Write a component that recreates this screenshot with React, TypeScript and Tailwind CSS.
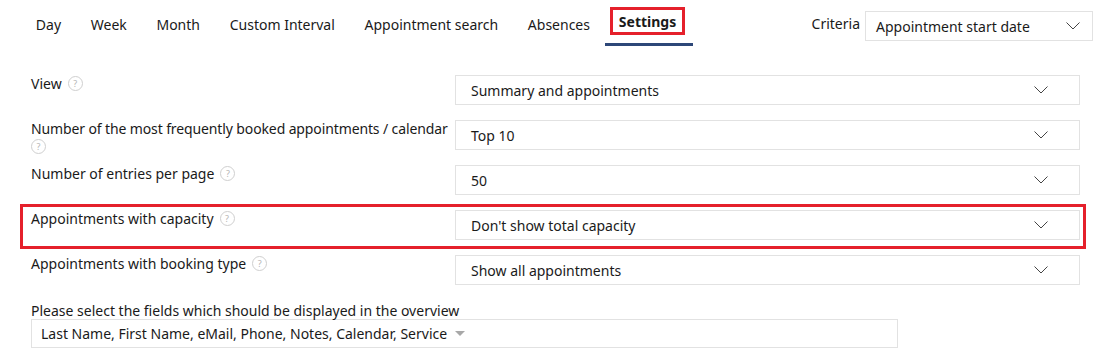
import React from "react";

const font = { fontFamily: '"Noto Sans", "Open Sans", Arial, sans-serif' };

function Help() {
  return (
    <span className="ml-[6px] inline-flex h-[15px] w-[15px] items-center justify-center rounded-full border border-[#cfcfcf] align-[2px] text-[9px] leading-none text-[#b5b5b5]">
      ?
    </span>
  );
}

function Chevron() {
  return (
    <svg width="14" height="8" viewBox="0 0 14 8" className="shrink-0">
      <polyline points="0.5,0.5 7,7 13.5,0.5" fill="none" stroke="#444" strokeWidth="1" />
    </svg>
  );
}

function Select({ value }: { value: string }) {
  return (
    <div className="flex h-[30px] flex-1 items-center justify-between border border-[#e2e2e2] bg-white pl-[15px] pr-[31px] text-[14px] text-[#1a1a1a]">
      <span>{value}</span>
      <Chevron />
    </div>
  );
}

function Row({ label, value, highlight, helpBreak }: { label: string; value: string; highlight?: boolean; helpBreak?: boolean }) {
  return (
    <div
      className={
        "flex h-[45px] items-start border-[3px] pb-0 pl-[8px] pr-[3px] pt-[3px] " +
        (highlight ? "border-[#e5202b]" : "border-transparent")
      }
    >
      <div
        className={
          "w-[424px] shrink-0 text-[14px] leading-[18px] text-[#1a1a1a] " + (helpBreak ? "tracking-[-0.12px]" : "")
        }
      >
        {label}
        {helpBreak ? <br /> : null}
        {helpBreak ? <span className="-ml-[6px] tracking-normal"><Help /></span> : <Help />}
      </div>
      <Select value={value} />
    </div>
  );
}

const tabs = ["Day", "Week", "Month", "Custom Interval", "Appointment search", "Absences"];

export default function App() {
  return (
    <div style={font} className="h-[356px] w-[1105px] overflow-hidden bg-white text-[#1a1a1a]">
      <div className="flex items-start justify-between">
        <nav className="flex pl-[21px] pt-[15px]">
          {tabs.map((t) => (
            <div key={t} className="border-b-[3px] border-transparent px-[14.85px] pb-[8px] text-[14px] leading-[20px]">
              {t}
            </div>
          ))}
          <div className="border-b-[3px] border-[#2d4778] pb-[8px] pl-[5px] pr-[8px] text-[14px] leading-[20px]">
            <span className="-mb-[1px] -mt-[8px] inline-block border-[3px] border-[#e5202b] px-[6px] pb-0 pt-[2px] align-top font-bold">
              Settings
            </span>
          </div>
        </nav>
        <div className="mr-[12px] mt-[11px] flex items-start">
          <span className="mr-[5px] pt-[4px] text-[14px] leading-[18px]">Criteria</span>
          <div className="flex h-[30px] w-[228px] items-center justify-between border border-[#e2e2e2] pl-[10px] pr-[12px] text-[14px]">
            <span>Appointment start date</span>
            <Chevron />
          </div>
        </div>
      </div>

      <div className="ml-[20px] mt-[23px] w-[1066px]">
        <Row label="View" value="Summary and appointments" />
        <Row label="Number of the most frequently booked appointments / calendar" value="Top 10" helpBreak />
        <Row label="Number of entries per page" value="50" />
        <Row label="Appointments with capacity" value="Don't show total capacity" highlight />
        <Row label="Appointments with booking type" value="Show all appointments" />
      </div>

      <div className="ml-[31px] mt-[8px]">
        <div className="text-[14px] leading-[18px]">Please select the fields which should be displayed in the overview</div>
        <div className="mt-[-1px] flex h-[29px] w-[867px] items-center border border-[#e2e2e2] pl-[9px] text-[14px]">
          <span>Last Name, First Name, eMail, Phone, Notes, Calendar, Service</span>
          <svg width="10" height="6" viewBox="0 0 10 6" className="ml-[8px]">
            <polygon points="0,0 10,0 5,5" fill="#a8a8a8" />
          </svg>
        </div>
      </div>
    </div>
  );
}
